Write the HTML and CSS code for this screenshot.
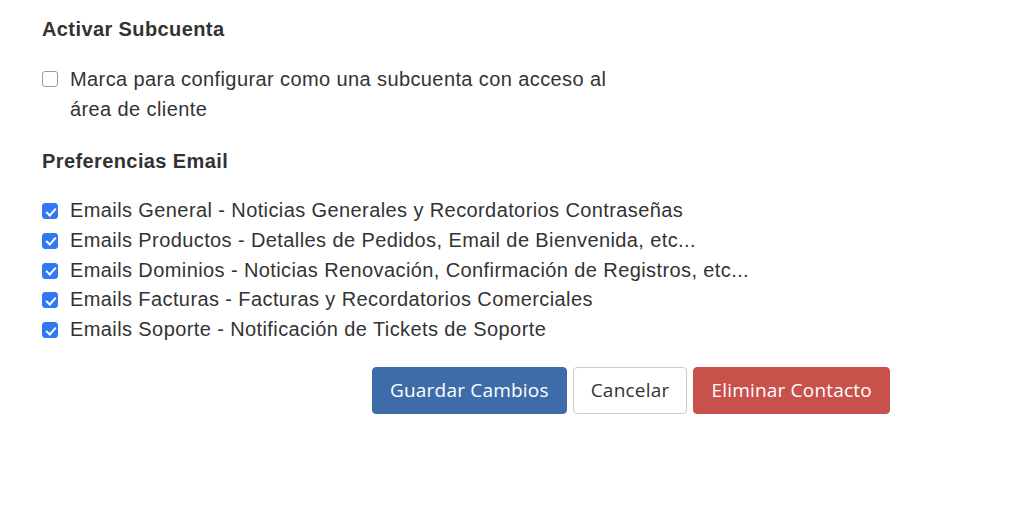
FILE: index.html
```html
<!DOCTYPE html>
<html lang="es">
<head>
<meta charset="utf-8">
<link rel="stylesheet" href="styles.css">
</head>
<body>
<div class="form">
  <section class="group">
    <h4 class="group-title">Activar Subcuenta</h4>
    <label class="check wrap">
      <input type="checkbox" class="box">
      <span class="check-text">Marca para configurar como una subcuenta con acceso al área de cliente</span>
    </label>
  </section>
  <section class="group">
    <h4 class="group-title">Preferencias Email</h4>
    <div class="check-list">
      <label class="check"><input type="checkbox" class="box" checked><span class="check-text">Emails General - Noticias Generales y Recordatorios Contraseñas</span></label>
      <label class="check"><input type="checkbox" class="box" checked><span class="check-text">Emails Productos - Detalles de Pedidos, Email de Bienvenida, etc...</span></label>
      <label class="check"><input type="checkbox" class="box" checked><span class="check-text">Emails Dominios - Noticias Renovación, Confirmación de Registros, etc...</span></label>
      <label class="check"><input type="checkbox" class="box" checked><span class="check-text">Emails Facturas - Facturas y Recordatorios Comerciales</span></label>
      <label class="check"><input type="checkbox" class="box" checked><span class="check-text">Emails Soporte - Notificación de Tickets de Soporte</span></label>
    </div>
  </section>
  <div class="actions">
    <button class="btn btn-primary" type="button">Guardar Cambios</button>
    <button class="btn btn-default" type="button">Cancelar</button>
    <button class="btn btn-danger" type="button">Eliminar Contacto</button>
  </div>
</div>
</body>
</html>
```
FILE: styles.css
```css
* { box-sizing: border-box; }
html, body { margin: 0; padding: 0; background: #fff; }
body {
  font-family: "Liberation Sans", Arial, sans-serif;
  font-size: 20px;
  letter-spacing: 0.4px;
  color: #333;
}
.form {
  padding: 16px 42px 0 42px;
  width: 933px;
}
.group { margin-bottom: 24px; }
.group-title {
  margin: 0 0 22px 0;
  font-size: 20px;
  font-weight: bold;
  line-height: 26px;
  color: #333;
}
.check {
  display: flex;
  align-items: flex-start;
  gap: 12px;
  line-height: 30px;
  cursor: pointer;
}
.check-list .check { line-height: 29.75px; }
.check.wrap .check-text { width: 560px; }
.box {
  appearance: none;
  -webkit-appearance: none;
  flex: none;
  position: relative;
  width: 16px;
  height: 16px;
  margin: 7px 0 0 0;
  border: 1px solid #9a9a9a;
  border-radius: 3px;
  background: #fff;
}
.box:checked {
  background: #3178f3;
  border-color: #3178f3;
}
.box:checked::after {
  content: "";
  position: absolute;
  left: 4.5px;
  top: 1.5px;
  width: 4px;
  height: 8px;
  border: solid #fff;
  border-width: 0 2.2px 2.2px 0;
  transform: rotate(42deg);
}
.actions {
  display: flex;
  gap: 6px;
  padding-left: 330px;
  margin-top: -2px;
}
.btn {
  font-family: "Open Sans", sans-serif;
  font-size: 19px;
  letter-spacing: 0.2px;
  line-height: 25px;
  padding: 10px 17px 10px 17px;
  height: 47px;
  border-radius: 4px;
  border: 1px solid transparent;
  cursor: pointer;
}
.btn-primary { background: #3d6ca9; border-color: #3d6ca9; color: #fff; }
.btn-default { background: #fff; border-color: #ccc; color: #333; }
.btn-danger { background: #c8514b; border-color: #c8514b; color: #fff; }
```
